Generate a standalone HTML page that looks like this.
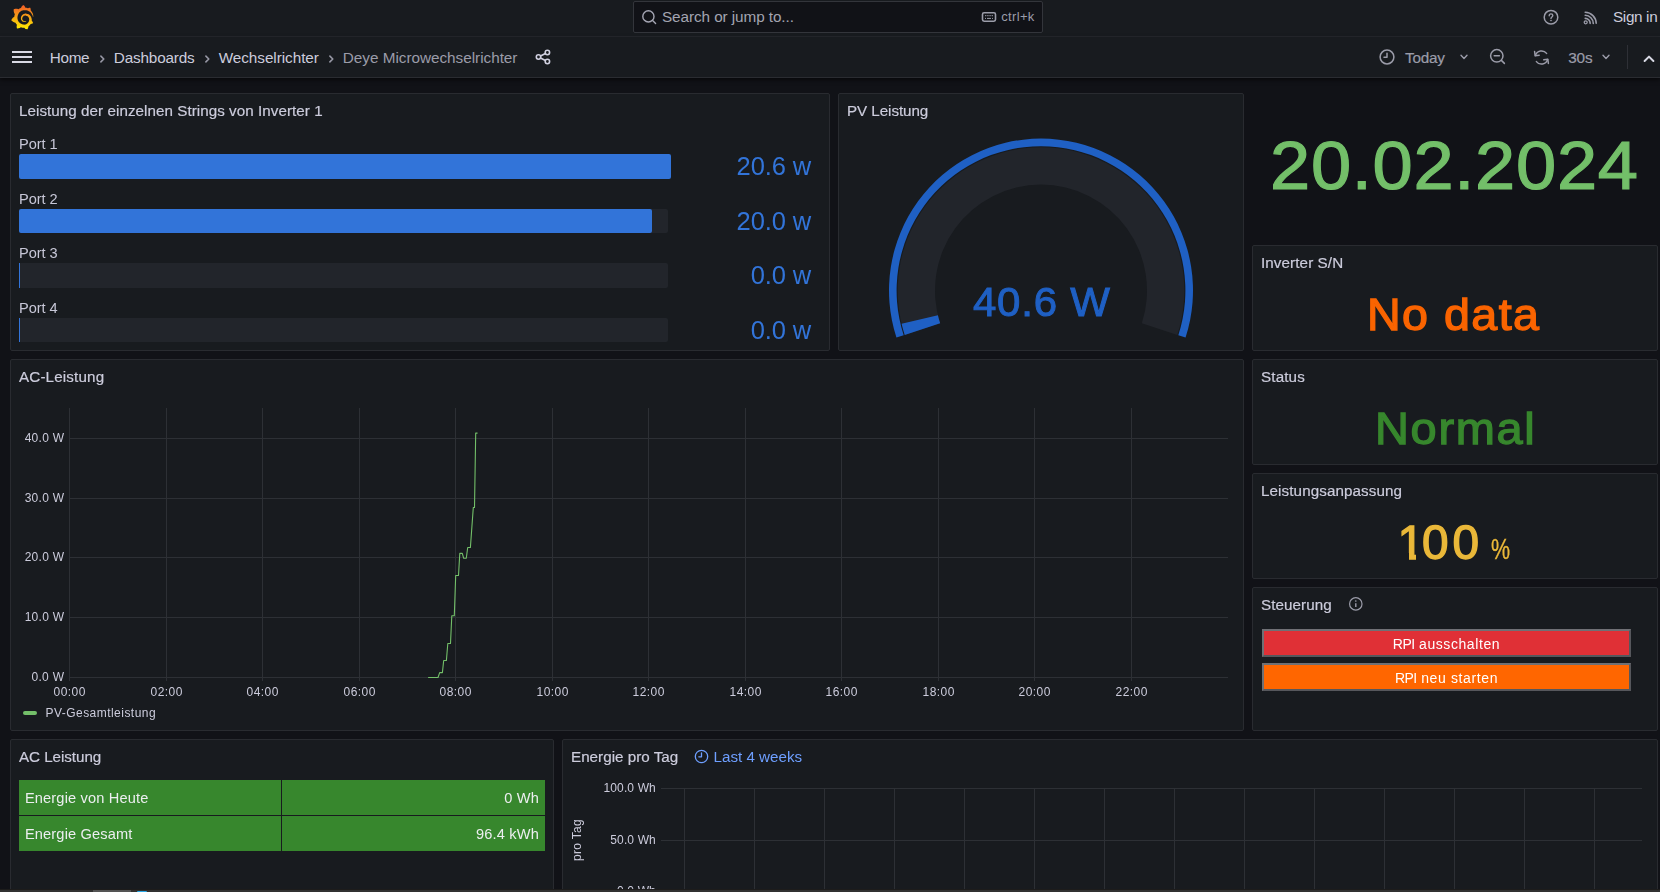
<!DOCTYPE html>
<html lang="de">
<head>
<meta charset="utf-8">
<title>Deye Microwechselrichter - Wechselrichter - Dashboards - Grafana</title>
<style>
*{box-sizing:border-box;margin:0;padding:0}
html,body{width:1660px;height:892px;overflow:hidden;background:#111217}
body{font-family:"Liberation Sans",sans-serif;color:#ccccdc;font-size:14px;position:relative}
#root{position:absolute;left:0;top:0;width:1660px;height:892px;overflow:hidden;background:#111217}
.abs{position:absolute}
.t{position:absolute;white-space:nowrap;line-height:1;color:#ccccdc}
.panel{position:absolute;background:#181b1f;border:1px solid #292b30;border-radius:2px}
.title{position:absolute;left:8px;top:9.1px;font-size:15.2px;font-weight:500;line-height:1;white-space:nowrap;color:#ccccdc;letter-spacing:.05px;-webkit-text-stroke:.2px #ccccdc}
svg{position:absolute;overflow:visible}
.lbl{font-size:14.6px;letter-spacing:-.05px;margin-top:-.6px;color:#c7c7d7}
.val{font-size:25.5px;letter-spacing:-.1px;margin-right:.1px;color:#3274d9}
.ax{font-size:12px;color:#ccccdc}
.btn{width:369px;height:28px;border:2px solid;border-color:#6f7075 #56575c #56575c #6f7075;color:#fff;font-size:14px;line-height:26px;text-align:center;white-space:nowrap}
.cell{background:#37872d;color:#eceef0;font-size:14.6px;white-space:nowrap}
.cell span{position:absolute;top:0;line-height:36px}
/* top bars */
#topbar{left:0;top:0;width:1660px;height:37px;background:#181b1f;border-bottom:1px solid #25272c}
#navbar{left:0;top:37px;width:1660px;height:41px;background:#181b1f;border-bottom:1px solid #2a2c31;box-shadow:0 2px 4px rgba(0,0,0,.55)}
#search{left:633px;top:1px;width:410px;height:32px;background:#111217;border:1px solid #33353b;border-radius:2px}
</style>
</head>
<body>
<div id="root">

<!-- ======= TOP BAR ======= -->
<div id="topbar" class="abs"></div>
<div id="search" class="abs"></div>
<div id="navbar" class="abs"></div>
<svg id="logo" style="left:10.8px;top:4.8px" width="22.6" height="24.5" viewBox="4 0 343 365" preserveAspectRatio="none"><defs><linearGradient id="lg" x1="0" y1="1" x2="0" y2="0"><stop offset="0" stop-color="#fff100"/><stop offset="1" stop-color="#f05a28"/></linearGradient></defs><path fill="url(#lg)" d="M342,161.2c-0.6-6.1-1.6-13.1-3.6-20.9c-2-7.7-5-16.2-9.4-25c-4.4-8.8-10.1-17.9-17.5-26.8c-2.9-3.5-6.1-6.9-9.5-10.2c5.1-20.3-6.2-37.9-6.2-37.9c-19.5-1.2-31.9,6.1-36.5,9.4c-0.8-0.3-1.5-0.7-2.3-1c-3.3-1.3-6.7-2.6-10.3-3.7c-3.5-1.1-7.1-2.1-10.8-3c-3.7-0.9-7.4-1.6-11.2-2.2c-0.7-0.1-1.3-0.2-2-0.3c-8.5-27.2-32.9-38.6-32.9-38.6c-27.3,17.3-32.4,41.5-32.4,41.5s-0.1,0.5-0.3,1.4c-1.5,0.4-3,0.9-4.5,1.3c-2.1,0.6-4.2,1.4-6.2,2.2c-2.1,0.8-4.1,1.6-6.2,2.5c-4.1,1.8-8.2,3.8-12.2,6c-3.9,2.2-7.7,4.6-11.4,7.1c-0.5-0.2-1-0.4-1-0.4c-37.8-14.4-71.3,2.9-71.3,2.9c-3.1,40.2,15.1,65.5,18.7,70.1c-0.9,2.5-1.7,5-2.5,7.5c-2.8,9.1-4.9,18.4-6.2,28.1c-0.2,1.4-0.4,2.8-0.5,4.2C18.8,192.7,8.5,228,8.5,228c29.1,33.5,63.1,35.6,63.1,35.6c0,0,0.1-0.1,0.1-0.1c4.3,7.7,9.3,15,14.9,21.9c2.4,2.9,4.8,5.6,7.4,8.3c-10.6,30.4,1.5,55.6,1.5,55.6c32.4,1.2,53.7-14.2,58.2-17.7c3.2,1.1,6.5,2.1,9.8,2.9c10,2.6,20.2,4.1,30.4,4.5c2.5,0.1,5.1,0.2,7.6,0.1l1.2,0l0.8,0l1.6,0l1.6-0.1l0,0.1c15.3,21.8,42.1,24.9,42.1,24.9c19.1-20.1,20.2-40.1,20.2-44.4l0,0c0,0,0-0.1,0-0.3c0-0.4,0-0.6,0-0.6l0,0c0-0.3,0-0.6,0-0.9c4-2.8,7.8-5.8,11.4-9.1c7.6-6.9,14.3-14.8,19.9-23.3c0.5-0.8,1-1.6,1.5-2.4c21.6,1.2,36.9-13.4,36.9-13.4c-3.6-22.5-16.4-33.5-19.1-35.6l0,0c0,0-0.1-0.1-0.3-0.2c-0.2-0.1-0.2-0.2-0.2-0.2c0,0,0,0,0,0c-0.1-0.1-0.3-0.2-0.5-0.3c0.1-1.4,0.2-2.7,0.3-4.1c0.2-2.4,0.2-4.9,0.2-7.3l0-1.8l0-0.9l0-0.5c0-0.6,0-0.4,0-0.6l-0.1-1.5l-0.1-2c0-0.7-0.1-1.3-0.2-1.9c-0.1-0.6-0.1-1.3-0.2-1.9l-0.2-1.9l-0.3-1.9c-0.4-2.5-0.8-4.9-1.4-7.4c-2.3-9.7-6.1-18.9-11-27.2c-5-8.3-11.2-15.6-18.3-21.8c-7-6.2-14.9-11.2-23.1-14.9c-8.3-3.7-16.9-6.1-25.5-7.2c-4.3-0.6-8.6-0.8-12.9-0.7l-1.6,0l-0.4,0c-0.1,0-0.6,0-0.5,0l-0.7,0l-1.6,0.1c-0.6,0-1.2,0.1-1.7,0.1c-2.2,0.2-4.4,0.5-6.5,0.9c-8.6,1.6-16.7,4.7-23.8,9c-7.1,4.3-13.3,9.6-18.3,15.6c-5,6-8.9,12.7-11.6,19.6c-2.7,6.9-4.2,14.1-4.6,21c-0.1,1.7-0.1,3.5-0.1,5.2c0,0.4,0,0.9,0,1.3l0.1,1.4c0.1,0.8,0.1,1.7,0.2,2.5c0.3,3.5,1,6.9,1.9,10.1c1.9,6.5,4.9,12.4,8.6,17.4c3.7,5,8.2,9.1,12.9,12.4c4.7,3.2,9.8,5.5,14.8,7c5,1.5,10,2.1,14.7,2.1c0.6,0,1.2,0,1.7,0c0.3,0,0.6,0,0.9,0c0.3,0,0.6,0,0.9-0.1c0.5,0,1-0.1,1.5-0.1c0.1,0,0.3,0,0.4-0.1l0.5-0.1c0.3,0,0.6-0.1,0.9-0.1c0.6-0.1,1.1-0.2,1.7-0.3c0.6-0.1,1.1-0.2,1.6-0.4c1.1-0.2,2.1-0.6,3.1-0.9c2-0.7,4-1.5,5.7-2.4c1.8-0.9,3.4-2,5-3c0.4-0.3,0.9-0.6,1.3-1c1.6-1.3,1.9-3.7,0.6-5.3c-1.1-1.4-3.1-1.8-4.7-0.9c-0.4,0.2-0.8,0.4-1.2,0.6c-1.4,0.7-2.8,1.3-4.3,1.8c-1.5,0.5-3.1,0.9-4.7,1.2c-0.8,0.1-1.6,0.2-2.5,0.3c-0.4,0-0.8,0.1-1.3,0.1c-0.4,0-0.9,0-1.2,0c-0.4,0-0.8,0-1.2,0c-0.5,0-1,0-1.5-0.1c0,0-0.3,0-0.1,0l-0.2,0l-0.3,0c-0.2,0-0.5,0-0.7-0.1c-0.5-0.1-0.9-0.1-1.4-0.2c-3.7-0.5-7.4-1.6-10.9-3.2c-3.6-1.6-7-3.8-10.1-6.6c-3.1-2.8-5.8-6.1-7.9-9.9c-2.1-3.8-3.6-8-4.3-12.4c-0.3-2.2-0.5-4.5-0.4-6.7c0-0.6,0.1-1.2,0.1-1.8c0,0.2,0-0.1,0-0.1l0-0.2l0-0.5c0-0.3,0.1-0.6,0.1-0.9c0.1-1.2,0.3-2.4,0.5-3.6c1.7-9.6,6.5-19,13.9-26.1c1.9-1.8,3.9-3.4,6-4.9c2.1-1.5,4.4-2.8,6.8-3.9c2.4-1.1,4.8-2,7.4-2.7c2.5-0.7,5.1-1.1,7.8-1.4c1.3-0.1,2.6-0.2,4-0.2c0.4,0,0.6,0,0.9,0l1.1,0l0.7,0c0.3,0,0,0,0.1,0l0.3,0l1.1,0.1c2.9,0.2,5.7,0.6,8.5,1.3c5.6,1.2,11.1,3.3,16.2,6.1c10.2,5.7,18.9,14.5,24.2,25.1c2.7,5.3,4.6,11,5.5,16.9c0.2,1.5,0.4,3,0.5,4.5l0.1,1.1l0.1,1.1c0,0.4,0,0.8,0,1.1c0,0.4,0,0.8,0,1.1l0,1l0,1.1c0,0.7-0.1,1.9-0.1,2.6c-0.1,1.6-0.3,3.3-0.5,4.9c-0.2,1.6-0.5,3.2-0.8,4.8c-0.3,1.6-0.7,3.2-1.1,4.7c-0.8,3.1-1.8,6.2-3,9.3c-2.4,6-5.6,11.8-9.4,17.1c-7.7,10.6-18.2,19.2-30.2,24.7c-6,2.7-12.3,4.7-18.8,5.7c-3.2,0.6-6.5,0.9-9.8,1l-0.6,0l-0.5,0l-1.1,0l-1.6,0l-0.8,0c0.4,0-0.1,0-0.1,0l-0.3,0c-1.8,0-3.5-0.1-5.3-0.3c-7-0.5-13.9-1.8-20.7-3.7c-6.7-1.9-13.2-4.6-19.4-7.8c-12.3-6.6-23.4-15.6-32-26.5c-4.3-5.4-8.1-11.3-11.2-17.4c-3.1-6.1-5.6-12.6-7.4-19.1c-1.8-6.6-2.9-13.3-3.4-20.1l-0.1-1.3l0-0.3l0-0.3l0-0.6l0-1.1l0-0.3l0-0.4l0-0.8l0-1.6l0-0.3c0,0,0,0.1,0-0.1l0-0.6c0-0.8,0-1.7,0-2.5c0.1-3.3,0.4-6.8,0.8-10.2c0.4-3.4,1-6.9,1.7-10.3c0.7-3.4,1.5-6.8,2.5-10.2c1.9-6.7,4.3-13.2,7.1-19.3c5.7-12.2,13.1-23.1,22-31.8c2.2-2.2,4.5-4.2,6.9-6.2c2.4-1.9,4.9-3.7,7.5-5.4c2.5-1.7,5.2-3.2,7.9-4.6c1.3-0.7,2.7-1.4,4.1-2c0.7-0.3,1.4-0.6,2.1-0.9c0.7-0.3,1.4-0.6,2.1-0.9c2.8-1.2,5.7-2.2,8.7-3.1c0.7-0.2,1.5-0.4,2.2-0.7c0.7-0.2,1.5-0.4,2.2-0.6c1.5-0.4,3-0.8,4.5-1.1c0.7-0.2,1.5-0.3,2.3-0.5c0.8-0.2,1.5-0.3,2.3-0.5c0.8-0.1,1.5-0.3,2.3-0.4l1.1-0.2l1.2-0.2c0.8-0.1,1.5-0.2,2.3-0.3c0.9-0.1,1.7-0.2,2.6-0.3c0.7-0.1,1.9-0.2,2.6-0.3c0.5-0.1,1.1-0.1,1.6-0.2l1.1-0.1l0.5-0.1l0.6,0c0.9-0.1,1.7-0.1,2.6-0.2l1.3-0.1c0,0,0.5,0,0.1,0l0.3,0l0.6,0c0.7,0,1.5-0.1,2.2-0.1c2.9-0.1,5.9-0.1,8.8,0c5.8,0.2,11.5,0.9,17,1.9c11.1,2.1,21.5,5.6,31,10.3c9.5,4.6,17.9,10.3,25.3,16.5c0.5,0.4,0.9,0.8,1.4,1.2c0.4,0.4,0.9,0.8,1.3,1.2c0.9,0.8,1.7,1.6,2.6,2.4c0.9,0.8,1.7,1.6,2.5,2.4c0.8,0.8,1.6,1.6,2.4,2.5c3.1,3.3,6,6.6,8.6,10c5.2,6.7,9.4,13.5,12.7,19.9c0.2,0.4,0.4,0.8,0.6,1.2c0.2,0.4,0.4,0.8,0.6,1.2c0.4,0.8,0.8,1.6,1.1,2.4c0.4,0.8,0.7,1.5,1.1,2.3c0.3,0.8,0.7,1.5,1,2.3c1.2,3,2.4,5.9,3.3,8.6c1.5,4.4,2.6,8.3,3.5,11.7c0.3,1.4,1.6,2.3,3,2.1c1.5-0.1,2.6-1.3,2.6-2.8C342.6,170.4,342.5,166.1,342,161.2z"/></svg>
<!-- search -->
<svg style="left:640.9px;top:8.7px" width="16" height="16" viewBox="0 0 16 16" fill="none" stroke="#a5a6b4" stroke-width="1.4" stroke-linecap="round"><circle cx="7.4" cy="7.4" r="5.6"/><path d="M11.6 11.6 L14.6 14.6"/></svg>
<div class="t" id="tsearch" style="left:662px;top:8.95px;font-size:15.3px;letter-spacing:-.08px;color:#a3a4b1">Search or jump to...</div>
<svg style="left:981px;top:11px" width="16" height="12" viewBox="0 0 16 12" fill="none" stroke="#9b9ca9" stroke-width="1.6"><rect x="1.5" y="1.8" width="13" height="8.4" rx="1.6"/><path d="M4 4.7h8" stroke-width="1" stroke-dasharray="1.4 .8"/><path d="M4 7.4h1M6 7.4h4M11 7.4h1" stroke-width="1"/></svg>
<div class="t" id="tctrlk" style="left:1001.2px;top:10.1px;font-size:13px;letter-spacing:.35px;color:#9b9ca9">ctrl+k</div>
<!-- help -->
<svg style="left:1543px;top:9px" width="16" height="16" viewBox="0 0 16 16" fill="none" stroke="#9b9ca9" stroke-width="1.5"><circle cx="8" cy="8.2" r="6.8"/><path d="M6.2 6.7c0-1.1.8-1.8 1.8-1.8s1.8.7 1.8 1.7c0 1.4-1.8 1.4-1.8 2.8" stroke-linecap="round" stroke-width="1.4"/><circle cx="8" cy="11.5" r=".6" fill="#9b9ca9" stroke-width=".6"/></svg>
<!-- rss -->
<svg style="left:1583px;top:10px" width="15" height="15" viewBox="0 0 15 15" fill="none" stroke="#9b9ca9" stroke-width="1.6" stroke-linecap="round"><circle cx="2.7" cy="12.3" r="1.5" stroke-width="1.3"/><path d="M2.2 8.4a5.2 5.2 0 0 1 5 5M2.2 5.3a8.3 8.3 0 0 1 8.1 8.1M2.2 2.3a11.2 11.2 0 0 1 11 11"/></svg>
<div class="t" id="tsignin" style="left:1613px;top:9.05px;font-size:15.3px;letter-spacing:-.35px;color:#ccccdc">Sign in</div>
<!-- NAV BAR -->
<div class="abs" style="left:12px;top:50.6px;width:20px;height:2px;background:#d8d9e4"></div>
<div class="abs" style="left:12px;top:56px;width:20px;height:2px;background:#d8d9e4"></div>
<div class="abs" style="left:12px;top:61.3px;width:20px;height:2px;background:#d8d9e4"></div>
<div class="t" id="bc1" style="left:49.8px;top:50.05px;font-size:15.3px;letter-spacing:-.35px">Home</div>
<svg style="left:99px;top:54.3px" width="7" height="10" viewBox="0 0 7 10" fill="none" stroke="#9697a4" stroke-width="1.6" stroke-linecap="round" stroke-linejoin="round"><path d="M1.9 2.1 L4.8 5 L1.9 7.9"/></svg>
<div class="t" id="bc2" style="left:113.8px;top:50.05px;font-size:15.3px;letter-spacing:-.17px">Dashboards</div>
<svg style="left:203.5px;top:54.3px" width="7" height="10" viewBox="0 0 7 10" fill="none" stroke="#9697a4" stroke-width="1.6" stroke-linecap="round" stroke-linejoin="round"><path d="M1.9 2.1 L4.8 5 L1.9 7.9"/></svg>
<div class="t" id="bc3" style="left:218.7px;top:50.05px;font-size:15.3px;letter-spacing:-.05px">Wechselrichter</div>
<svg style="left:327.5px;top:54.3px" width="7" height="10" viewBox="0 0 7 10" fill="none" stroke="#9697a4" stroke-width="1.6" stroke-linecap="round" stroke-linejoin="round"><path d="M1.9 2.1 L4.8 5 L1.9 7.9"/></svg>
<div class="t" id="bc4" style="left:342.8px;top:50.05px;font-size:15.3px;letter-spacing:-.02px;color:#9b9ca9">Deye Microwechselrichter</div>
<!-- share -->
<svg style="left:535px;top:49px" width="16" height="16" viewBox="0 0 16 16" fill="none" stroke="#d0d0e0" stroke-width="1.6"><circle cx="3.5" cy="8" r="2.2"/><circle cx="12.4" cy="3.5" r="2.2"/><circle cx="12.4" cy="12.5" r="2.2"/><path d="M5.5 7 L10.4 4.5M5.5 9 L10.4 11.5"/></svg>
<!-- time picker -->
<svg style="left:1379px;top:49.2px" width="16" height="16" viewBox="0 0 16 16" fill="none" stroke="#9b9ca9" stroke-width="1.5" stroke-linecap="round" stroke-linejoin="round"><circle cx="8" cy="8" r="6.9"/><path d="M8 4.2V8.3H5"/></svg>
<div class="t" id="ttoday" style="left:1405px;top:50.25px;font-size:15.3px;letter-spacing:-.25px;color:#9b9ca9;-webkit-text-stroke:.2px #9b9ca9">Today</div>
<svg style="left:1460px;top:54px" width="8" height="6" viewBox="0 0 8 6" fill="none" stroke="#9b9ca9" stroke-width="1.4" stroke-linecap="round" stroke-linejoin="round"><path d="M1 1.2 L4 4.4 L7 1.2"/></svg>
<svg style="left:1488.6px;top:47.8px" width="17" height="17" viewBox="0 0 17 17" fill="none" stroke="#9b9ca9" stroke-width="1.5" stroke-linecap="round"><circle cx="7.8" cy="7.8" r="6.2"/><path d="M12.4 12.4 L15.4 15.4M5.2 7.8H10.4"/></svg>
<svg style="left:1533.3px;top:48.8px" width="17" height="17" viewBox="0 0 17 17" fill="none" stroke="#9b9ca9" stroke-width="1.5" stroke-linecap="round" stroke-linejoin="round"><path d="M2.4 6.6A6.4 6.4 0 0 1 13.6 4.4M14.6 10.4A6.4 6.4 0 0 1 3.4 12.6"/><path d="M1.6 2.6 L2.2 6.8 L6.2 6.2M15.4 14.4 L14.8 10.2 L10.8 10.8"/></svg>
<div class="t" id="t30s" style="left:1568.2px;top:50.25px;font-size:15.3px;letter-spacing:-.1px;color:#9b9ca9;-webkit-text-stroke:.2px #9b9ca9">30s</div>
<svg style="left:1602px;top:54px" width="8" height="6" viewBox="0 0 8 6" fill="none" stroke="#9b9ca9" stroke-width="1.4" stroke-linecap="round" stroke-linejoin="round"><path d="M1 1.2 L4 4.4 L7 1.2"/></svg>
<div class="abs" style="left:1627px;top:45px;width:1px;height:24px;background:#2e3036"></div>
<svg style="left:1643px;top:53.9px" width="12" height="9" viewBox="0 0 12 9" fill="none" stroke="#d8d9e4" stroke-width="2" stroke-linecap="round" stroke-linejoin="round"><path d="M1.6 7 L6 2.6 L10.4 7"/></svg>
<!--TOP-->

<!-- ======= PANELS ======= -->
<div id="grid" class="abs" style="left:0;top:0;width:1660px;height:892px;will-change:transform;transform:translateZ(0)">
<div class="panel" id="p1" style="left:10px;top:93px;width:820px;height:258px"><div class="title">Leistung der einzelnen Strings von Inverter 1</div></div>
<div class="panel" id="p2" style="left:838px;top:93px;width:406px;height:258px"><div class="title" style="letter-spacing:-0.06px">PV Leistung</div></div>
<div class="panel" id="p4" style="left:1252px;top:245px;width:406px;height:106px"><div class="title" style="letter-spacing:0.10px">Inverter S/N</div></div>
<div class="panel" id="p5" style="left:10px;top:359px;width:1234px;height:372px"><div class="title" style="letter-spacing:0.15px">AC-Leistung</div></div>
<div class="panel" id="p6" style="left:1252px;top:359px;width:406px;height:106px"><div class="title" style="letter-spacing:0.15px">Status</div></div>
<div class="panel" id="p7" style="left:1252px;top:473px;width:406px;height:106px"><div class="title" style="letter-spacing:0.10px">Leistungsanpassung</div></div>
<div class="panel" id="p8" style="left:1252px;top:587px;width:406px;height:144px"><div class="title" style="letter-spacing:0.07px">Steuerung</div></div>
<div class="panel" id="p9" style="left:10px;top:739px;width:544px;height:200px"><div class="title" style="letter-spacing:-0.05px">AC Leistung</div></div>
<div class="panel" id="p10" style="left:562px;top:739px;width:1096px;height:200px"><div class="title" style="letter-spacing:0.02px">Energie pro Tag</div></div>

<!-- ===== panel 1: bar gauge ===== -->
<div class="t lbl" id="port1" style="left:19px;top:137.3px">Port 1</div>
<div class="abs" style="left:19px;top:154px;width:652px;height:25px;background:#3274d9;border-radius:2px"></div>
<div class="t val" id="v1" style="right:848.8px;top:153.6px">20.6 w</div>
<div class="t lbl" id="port2" style="left:19px;top:192.4px">Port 2</div>
<div class="abs" style="left:19px;top:209px;width:649px;height:24px;background:#22252b;border-radius:2px"></div>
<div class="abs" style="left:19px;top:209px;width:633px;height:24px;background:#3274d9;border-radius:2px"></div>
<div class="t val" id="v2" style="right:848.8px;top:209.2px">20.0 w</div>
<div class="t lbl" id="port3" style="left:19px;top:246.8px">Port 3</div>
<div class="abs" style="left:19px;top:263px;width:649px;height:25px;background:#22252b;border-radius:2px"></div>
<div class="abs" style="left:19px;top:263px;width:1px;height:25px;background:#3274d9"></div>
<div class="t val" id="v3" style="right:848.8px;top:262.9px">0.0 w</div>
<div class="t lbl" id="port4" style="left:19px;top:301.9px">Port 4</div>
<div class="abs" style="left:19px;top:318px;width:649px;height:24px;background:#22252b;border-radius:2px"></div>
<div class="abs" style="left:19px;top:318px;width:1px;height:24px;background:#3274d9"></div>
<div class="t val" id="v4" style="right:848.8px;top:317.5px">0.0 w</div>
<!-- ===== panel 2: gauge ===== -->
<svg style="left:0;top:0" width="1660" height="892" viewBox="0 0 1660 892">
<path fill="#22252b" d="M904.71 334.88A143.3 143.3 0 1 1 1177.29 334.88L1141.81 323.36A106 106 0 1 0 940.19 323.36Z"/>
<path fill="#1f60c4" d="M904.71 334.88A143.3 143.3 0 0 1 901.60 323.81L937.89 315.17A106 106 0 0 0 940.19 323.36Z"/>
<path fill="#1f60c4" d="M896.44 337.57A152 152 0 1 1 1185.56 337.57L1178.33 335.22A144.4 144.4 0 1 0 903.67 335.22Z"/>
</svg>
<div class="t" id="gval" style="left:972.9px;top:281.2px;font-size:41.5px;letter-spacing:.75px;color:#1f60c4;-webkit-text-stroke:1px #1f60c4;transform:scaleX(1.012);transform-origin:0 0">40.6 W</div>
<!-- ===== panel 3: date ===== -->
<div class="t" id="date" style="left:1270px;top:131.7px;font-size:68.8px;letter-spacing:.68px;color:#73bf69;-webkit-text-stroke:1.2px #73bf69;transform:scaleX(1.05);transform-origin:0 0">20.02.2024</div>
<!-- ===== panel 4: inverter s/n ===== -->
<div class="t" id="nodata" style="left:1366.9px;top:292.6px;font-size:44px;letter-spacing:1.36px;color:#fa6400;-webkit-text-stroke:1.3px #fa6400;transform:scaleX(1.06);transform-origin:0 0">No data</div>
<!-- ===== panel 5: AC-Leistung timeseries ===== -->
<svg id="chart1" style="left:0;top:0" width="1660" height="892" viewBox="0 0 1660 892">
<path d="M69.5 408V681M166.5 408V681M262.5 408V681M359.5 408V681M455.5 408V681M552.5 408V681M648.5 408V681M745.5 408V681M841.5 408V681M938.5 408V681M1034.5 408V681M1131.5 408V681M69 677.5H1228M69 617.5H1228M69 557.5H1228M69 498.5H1228M69 438.5H1228" stroke="#2d3035" stroke-width="1" fill="none" shape-rendering="crispEdges"/>
<path d="M428.1 677.5L438 677.5L439.7 672.6L442.4 672.6L443.7 660.5L446.4 660.5L447.8 643.5L450.5 643.5L451.8 615.7L454.3 615.7L455.7 575.5L458.5 575.5L459.8 553.4L462.3 553.4L463.7 558.3L466.3 558.3L467.7 547.5L470.4 547.5L473.3 507.5L474.5 507.5L475.7 433.1L477.5 433.1" stroke="#73bf69" stroke-width="1.1" fill="none" stroke-linejoin="round"/>
</svg>
<div class="t ax" style="right:1596.0px;top:670.7px;letter-spacing:.26px;margin-right:-.26px">0.0 W</div>
<div class="t ax" style="right:1596.0px;top:610.7px;letter-spacing:.26px;margin-right:-.26px">10.0 W</div>
<div class="t ax" style="right:1596.0px;top:550.7px;letter-spacing:.26px;margin-right:-.26px">20.0 W</div>
<div class="t ax" style="right:1596.0px;top:491.7px;letter-spacing:.26px;margin-right:-.26px">30.0 W</div>
<div class="t ax" style="right:1596.0px;top:431.7px;letter-spacing:.26px;margin-right:-.26px">40.0 W</div>
<div class="t ax" style="left:29.5px;width:80px;text-align:center;top:685.8px;letter-spacing:.45px;text-indent:.45px">00:00</div>
<div class="t ax" style="left:126.5px;width:80px;text-align:center;top:685.8px;letter-spacing:.45px;text-indent:.45px">02:00</div>
<div class="t ax" style="left:222.5px;width:80px;text-align:center;top:685.8px;letter-spacing:.45px;text-indent:.45px">04:00</div>
<div class="t ax" style="left:319.5px;width:80px;text-align:center;top:685.8px;letter-spacing:.45px;text-indent:.45px">06:00</div>
<div class="t ax" style="left:415.5px;width:80px;text-align:center;top:685.8px;letter-spacing:.45px;text-indent:.45px">08:00</div>
<div class="t ax" style="left:512.5px;width:80px;text-align:center;top:685.8px;letter-spacing:.45px;text-indent:.45px">10:00</div>
<div class="t ax" style="left:608.5px;width:80px;text-align:center;top:685.8px;letter-spacing:.45px;text-indent:.45px">12:00</div>
<div class="t ax" style="left:705.5px;width:80px;text-align:center;top:685.8px;letter-spacing:.45px;text-indent:.45px">14:00</div>
<div class="t ax" style="left:801.5px;width:80px;text-align:center;top:685.8px;letter-spacing:.45px;text-indent:.45px">16:00</div>
<div class="t ax" style="left:898.5px;width:80px;text-align:center;top:685.8px;letter-spacing:.45px;text-indent:.45px">18:00</div>
<div class="t ax" style="left:994.5px;width:80px;text-align:center;top:685.8px;letter-spacing:.45px;text-indent:.45px">20:00</div>
<div class="t ax" style="left:1091.5px;width:80px;text-align:center;top:685.8px;letter-spacing:.45px;text-indent:.45px">22:00</div>
<div class="abs" style="left:23px;top:711px;width:14px;height:4px;border-radius:2px;background:#73bf69"></div>
<div class="t ax" id="leg1" style="left:45.5px;top:706.7px;letter-spacing:.46px">PV-Gesamtleistung</div>
<!-- ===== panel 6: status ===== -->
<div class="t big" id="normal" style="left:1374.7px;top:407.3px;font-size:44.3px;letter-spacing:1.6px;color:#37872d;-webkit-text-stroke:1.3px #37872d;transform:scaleX(1.06);transform-origin:0 0">Normal</div>
<!-- ===== panel 7: Leistungsanpassung ===== -->
<div class="t big" id="hundred" style="left:1397.6px;top:519px;font-size:47.8px;letter-spacing:.8px;color:#eab839;-webkit-text-stroke:1.3px #eab839"><span style="letter-spacing:-2.1px">1</span><span style="letter-spacing:3.9px">0</span>0</div>
<div class="abs" style="left:1398px;top:553.2px;width:10.6px;height:8px;background:#181b1f"></div><div class="abs" style="left:1415.5px;top:553.2px;width:9px;height:8px;background:#181b1f"></div>
<div class="t big" id="pct" style="left:1491px;top:535px;font-size:29px;color:#eab839;-webkit-text-stroke:.35px #eab839;transform:scaleX(.74);transform-origin:0 0">%</div>
<!-- ===== panel 8: Steuerung ===== -->
<svg style="left:1348px;top:596px" width="16" height="16" viewBox="0 0 16 16" fill="none" stroke="#9b9ca9" stroke-width="1.2"><circle cx="7.8" cy="7.9" r="6.2"/><path d="M7.8 7.3V11" stroke-width="1.4"/><circle cx="7.8" cy="5" r=".55" fill="#9b9ca9" stroke-width=".5"/></svg>
<div class="abs btn" id="btn1" style="left:1262px;top:629px;background:#e03036"><span style="letter-spacing:-.55px">RPI</span><span style="letter-spacing:.58px"> ausschalten</span></div>
<div class="abs btn" id="btn2" style="left:1262px;top:663px;background:#ff6600"><span style="letter-spacing:-.55px">RPI</span><span style="letter-spacing:.62px"> neu starten</span></div>
<!-- ===== panel 9: AC Leistung table ===== -->
<div class="abs cell" style="left:19px;top:780px;width:262px;height:35px"><span style="left:5.9px;letter-spacing:.16px">Energie von Heute</span></div>
<div class="abs cell" style="left:282px;top:780px;width:263px;height:35px"><span style="right:5.9px;letter-spacing:.19px">0 Wh</span></div>
<div class="abs cell" style="left:19px;top:816px;width:262px;height:35px"><span style="left:5.9px;letter-spacing:.16px">Energie Gesamt</span></div>
<div class="abs cell" style="left:282px;top:816px;width:263px;height:35px"><span style="right:5.9px;letter-spacing:.19px">96.4 kWh</span></div>
<!-- ===== panel 10: Energie pro Tag ===== -->
<svg style="left:694px;top:749px" width="15" height="15" viewBox="0 0 15 15" fill="none" stroke="#6e9fff" stroke-width="1.3" stroke-linecap="round" stroke-linejoin="round"><circle cx="7.5" cy="7.5" r="6.2"/><path d="M7.5 3.8V7.8H4.8"/></svg>
<div class="t" id="last4" style="left:713.5px;top:749.05px;font-size:15.2px;letter-spacing:0px;color:#6e9fff">Last 4 weeks</div>
<svg id="chart2" style="left:0;top:0" width="1660" height="892" viewBox="0 0 1660 892"><path d="M661 788.5H1642M661 840.5H1642M684.5 788V892M754.5 788V892M824.5 788V892M894.5 788V892M964.5 788V892M1034.5 788V892M1104.5 788V892M1174.5 788V892M1244.5 788V892M1314.5 788V892M1384.5 788V892M1454.5 788V892M1524.5 788V892M1594.5 788V892" stroke="#2d3035" stroke-width="1" fill="none" shape-rendering="crispEdges"/></svg>
<div class="t ax" style="right:1004.2px;top:781.8px;letter-spacing:.14px;margin-right:-.14px">100.0 Wh</div>
<div class="t ax" style="right:1004.2px;top:833.7px;letter-spacing:.14px;margin-right:-.14px">50.0 Wh</div>
<div class="t ax" style="right:1004.2px;top:885.2px;letter-spacing:.14px;margin-right:-.14px">0.0 Wh</div>
<div class="t ax" id="protag" style="left:556.4px;top:833.5px;width:42px;text-align:center;letter-spacing:.3px;transform:rotate(-90deg);transform-origin:50% 50%">pro Tag</div>
<!-- bottom strip -->
<div class="abs" style="left:0;top:889px;width:1660px;height:1px;background:#1d1c1b"></div>
<div class="abs" style="left:0;top:890px;width:1660px;height:2px;background:#313131"></div>
<div class="abs" style="left:93px;top:890px;width:38px;height:2px;background:#545454"></div>
<div class="abs" style="left:137px;top:891px;width:10px;height:1px;background:#29a9e8;border-radius:1px 1px 0 0"></div>
<!--CONTENT-->
</div>
</div>
</body>
</html>
